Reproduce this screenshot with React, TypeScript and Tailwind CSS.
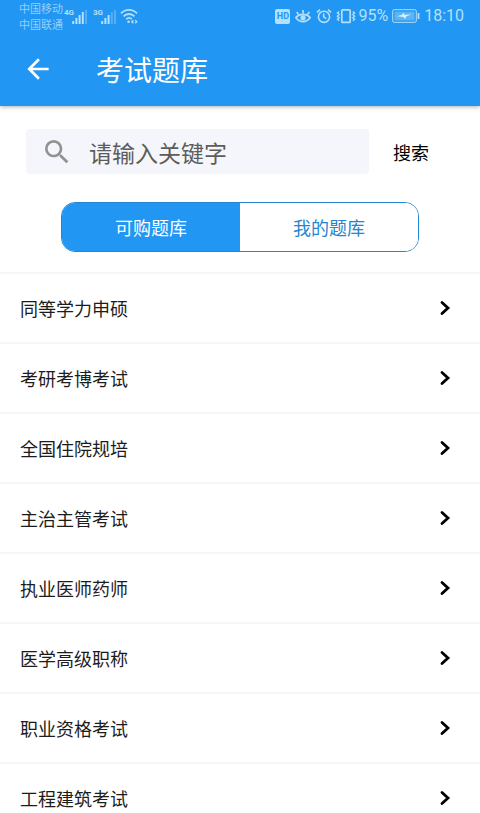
import React, { useState } from "react";
import { MdArrowBack, MdSearch } from "react-icons/md";

const categories = [
  "同等学力申硕",
  "考研考博考试",
  "全国住院规培",
  "主治主管考试",
  "执业医师药师",
  "医学高级职称",
  "职业资格考试",
  "工程建筑考试",
];

function Signal({ label, active }: { label: string; active: number }) {
  const bars = [3, 6, 9, 12, 14];
  return (
    <div className="flex items-start">
      <span className="w-2 font-['Roboto',sans-serif] text-[8px] leading-[8px] font-bold">{label}</span>
      <svg className="mt-px h-[14px] w-4" viewBox="0 0 16 14" fill="currentColor">
        {bars.map((h, i) => (
          <rect key={h} x={i * 3.2 + 0.2} y={14 - h} width="2" height={h} opacity={i < active ? 1 : 0.35} />
        ))}
      </svg>
    </div>
  );
}

function StatusBar() {
  return (
    <div className="flex h-8 items-center justify-between pr-4 pl-[19px] text-[#b5e0fb]">
      <div className="flex items-center">
        <div className="w-[45px] text-[11px] leading-[16px] whitespace-nowrap text-[#93cffa]">
          <div>中国移动</div>
          <div>中国联通</div>
        </div>
        <div className="flex items-center gap-[5px]">
          <Signal label="4G" active={4} />
          <Signal label="3G" active={3} />
        </div>
        <svg className="ml-[3px] h-4 w-[18px]" viewBox="0 0 18 16" fill="none" stroke="currentColor" strokeWidth="1.8">
          <path d="M1 5.4C5.4.7 12.6.7 17 5.4M3.6 8.4c3-3.2 7.8-3.2 10.8 0M6.2 11.2c1.7-1.6 3.9-1.6 5.6 0" />
          <circle cx="8.6" cy="13.8" r="1.3" fill="currentColor" stroke="none" />
          <path d="m13.4 12.3-1.6 1.5 1.6 1.5M15.2 12.3l1.6 1.5-1.6 1.5" strokeWidth="1.3" />
        </svg>
      </div>

      <div className="flex items-center font-['Roboto',sans-serif] text-base leading-5">
        <span className="flex h-[15px] w-[15px] items-center justify-center rounded-xs bg-[#b5e0fb] text-[9px] font-bold text-[#2196f3]">
          HD
        </span>
        <svg className="ml-[5px] h-4 w-4" viewBox="0 0 16 16" fill="none" stroke="currentColor" strokeWidth="1.7">
          <path d="M.8 9.5C4.6 5.4 11.4 5.4 15.2 9.5 11.4 15 4.6 15 .8 9.5Z" />
          <circle cx="8" cy="9.8" r="2.6" fill="currentColor" stroke="none" />
          <path d="M8 5.5V2M3.6 6.6 1.7 4M12.4 6.6 14.3 4" />
        </svg>
        <svg className="ml-[5px] h-4 w-4" viewBox="0 0 16 16" fill="none" stroke="currentColor" strokeWidth="1.6">
          <circle cx="8" cy="8.8" r="5.6" />
          <path d="M7.7 5.4v3.5l2.6 1.7M1 4.3l3-2.7M15 4.3l-3-2.7" />
        </svg>
        <svg className="ml-1 h-4 w-5" viewBox="0 0 20 16" fill="none" stroke="currentColor" strokeWidth="1.7">
          <rect x="5.8" y="1.8" width="8.4" height="12.6" rx="1" />
          <path
            d="M3.2 3.5 1.4 5l1.8 1.6-1.8 1.6 1.8 1.6-1.8 1.5 1.8 1.4M16.8 3.5 18.6 5l-1.8 1.6 1.8 1.6-1.8 1.6 1.8 1.5-1.8 1.4"
            strokeWidth="1.4"
          />
        </svg>
        <span className="ml-[2px]">95%</span>
        <svg className="ml-1 h-[14px] w-7" viewBox="0 0 28 14" fill="none" stroke="currentColor">
          <rect x=".7" y=".7" width="23.6" height="12.6" rx="1.5" />
          <rect x="2.5" y="2.5" width="20" height="9" fill="currentColor" stroke="none" opacity=".4" />
          <path d="m5 7.2 5-1.4 1.5-2 1 1.9 7-.3-5 1.9-1.7 2.6-1.3-1.9Z" fill="#d9f1ff" stroke="none" />
          <path d="M26.5 4v6" strokeWidth="1.8" />
        </svg>
        <span className="ml-1">18:10</span>
      </div>
    </div>
  );
}

export default function App() {
  const [tab, setTab] = useState<"shop" | "mine">("shop");
  const [keyword, setKeyword] = useState("");

  return (
    <div className="min-h-screen bg-white font-['Noto_Sans_CJK_SC',sans-serif] text-[#1c1c1c]">
      <header className="bg-[#2196f3] shadow-[0_1px_4px_rgba(0,0,0,0.3)]">
        <StatusBar />
        <div className="flex h-[74px] items-center pl-[22px] text-white">
          <button aria-label="返回">
            <MdArrowBack className="h-8 w-8" />
          </button>
          <h1 className="ml-[42px] text-[28px] leading-8">考试题库</h1>
        </div>
      </header>

      <main>
        <form className="flex items-center px-[26px] pt-[23px]" onSubmit={(e) => e.preventDefault()}>
          <label className="flex h-[45px] min-w-0 flex-1 items-center rounded-sm bg-[#f5f6fb] pl-[15px]">
            <MdSearch className="h-8 w-8 shrink-0 text-[#919191]" />
            <input
              type="text"
              aria-label="关键字"
              placeholder="请输入关键字"
              value={keyword}
              onChange={(e) => setKeyword(e.target.value)}
              className="ml-4 w-full min-w-0 bg-transparent text-[23px] leading-8 outline-none placeholder:text-[#5c5c5c]"
            />
          </label>
          <button type="submit" className="w-[85px] pl-6 text-left text-lg text-black">
            搜索
          </button>
        </form>

        <div className="mx-[61px] mt-7 mb-5 flex h-[50px] overflow-hidden rounded-[14px] border border-[#2585cf] text-lg">
          <button
            onClick={() => setTab("shop")}
            className={`flex-1 ${tab === "shop" ? "bg-[#2196f3] text-white" : "bg-white text-[#2585cf]"}`}
          >
            可购题库
          </button>
          <button
            onClick={() => setTab("mine")}
            className={`flex-1 ${tab === "mine" ? "bg-[#2196f3] text-white" : "bg-white text-[#2585cf]"}`}
          >
            我的题库
          </button>
        </div>

        <ul>
          {categories.map((name) => (
            <li key={name} className="border-t-2 border-[#f6f6f6]">
              <a href="#" className="flex h-[68px] items-center justify-between pr-[29px] pl-5 text-lg">
                {name}
                <svg className="h-4 w-3" viewBox="0 0 12 16" fill="none" stroke="#000" strokeWidth="2.8" strokeLinecap="round">
                  <path d="m3 2.5 6 5.5-6 5.5" />
                </svg>
              </a>
            </li>
          ))}
        </ul>
      </main>
    </div>
  );
}
